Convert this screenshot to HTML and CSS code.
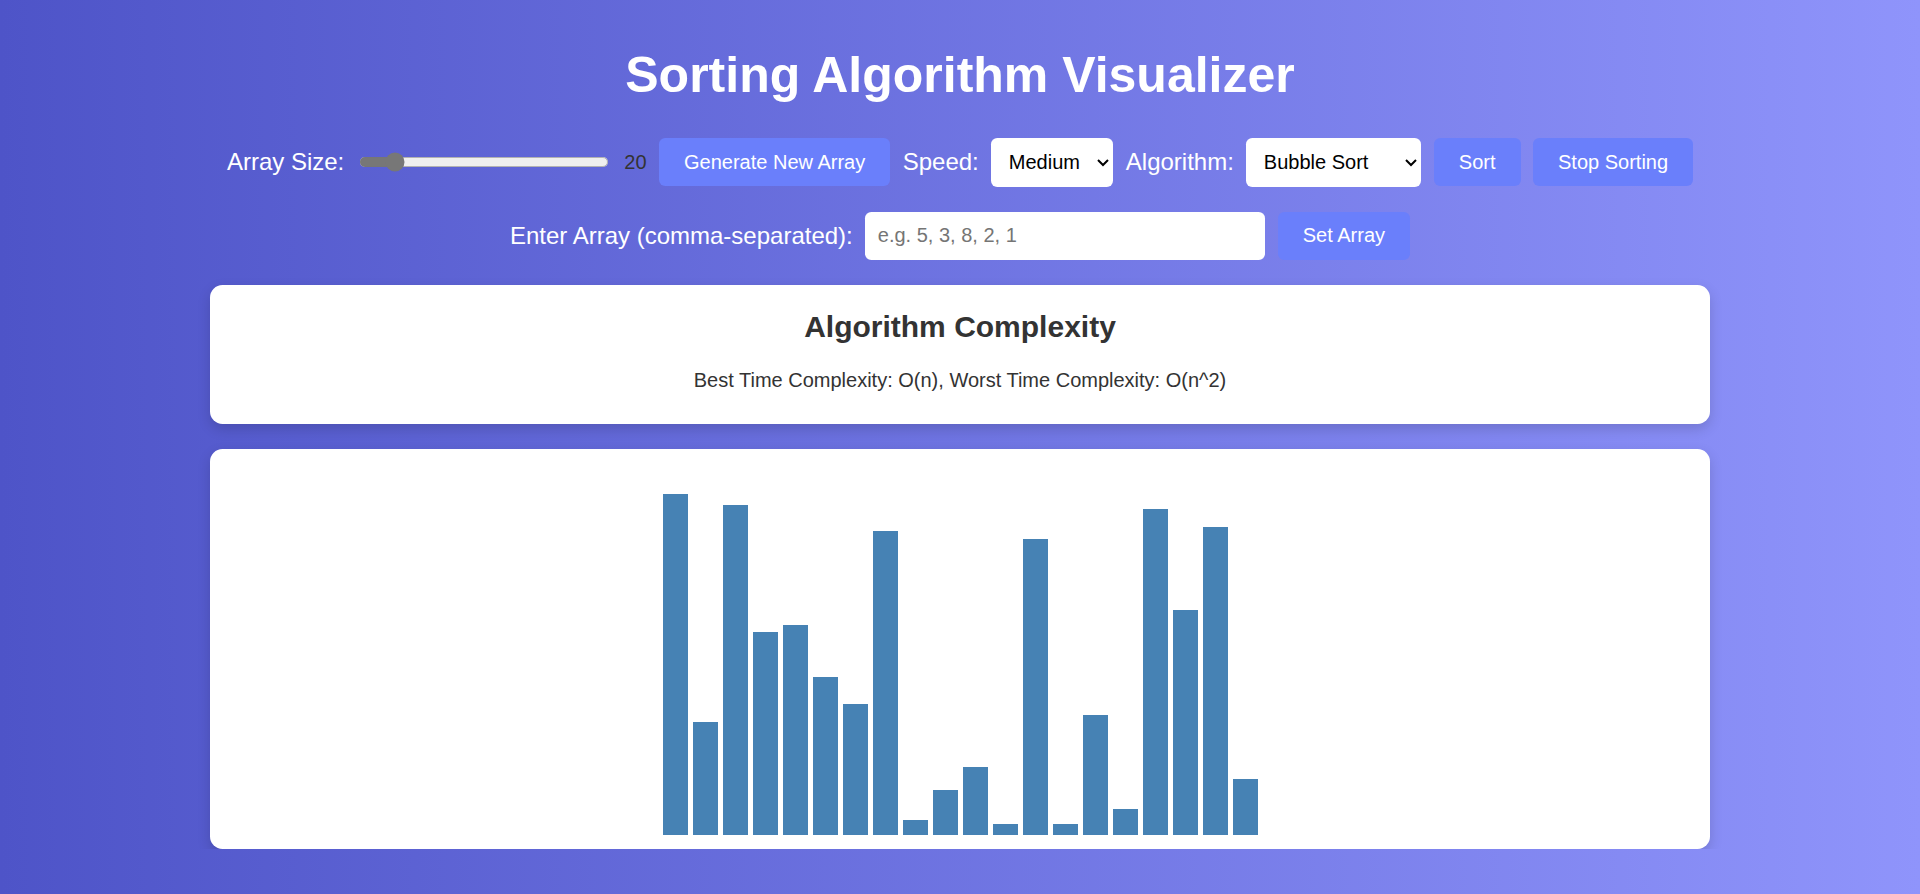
FILE: index.html
```html
<!DOCTYPE html>
<html lang="en">
<head>
<meta charset="utf-8">
<title>Sorting Algorithm Visualizer</title>
<link rel="stylesheet" href="styles.css">
</head>
<body>
  <h1 class="title">Sorting Algorithm Visualizer</h1>

  <div class="controls">
    <label class="label" for="size">Array Size:</label>
    <input class="range" id="size" type="range" min="10" max="100" value="20">
    <span class="size-value">20</span>
    <button class="btn">Generate New Array</button>
    <label class="label" for="speed">Speed:</label>
    <select class="select" id="speed">
      <option>Slow</option>
      <option selected>Medium</option>
      <option>Fast</option>
    </select>
    <label class="label" for="algo">Algorithm:</label>
    <select class="select" id="algo">
      <option selected>Bubble Sort</option>
      <option>Selection Sort</option>
      <option>Insertion Sort</option>
      <option>Merge Sort</option>
      <option>Quick Sort</option>
    </select>
    <button class="btn">Sort</button>
    <button class="btn">Stop Sorting</button>
  </div>

  <div class="controls controls-input">
    <label class="label" for="custom">Enter Array (comma-separated):</label>
    <input class="text-input" id="custom" type="text" placeholder="e.g. 5, 3, 8, 2, 1">
    <button class="btn">Set Array</button>
  </div>

  <main class="container">
    <section class="card complexity">
      <h2 class="complexity-title">Algorithm Complexity</h2>
      <p class="complexity-text">Best Time Complexity: O(n), Worst Time Complexity: O(n^2)</p>
    </section>

    <section class="card chart">
      <div class="bars">
        <div class="bar" style="height:273px"></div>
        <div class="bar" style="height:90px"></div>
        <div class="bar" style="height:264px"></div>
        <div class="bar" style="height:162px"></div>
        <div class="bar" style="height:168px"></div>
        <div class="bar" style="height:126px"></div>
        <div class="bar" style="height:105px"></div>
        <div class="bar" style="height:243px"></div>
        <div class="bar" style="height:12px"></div>
        <div class="bar" style="height:36px"></div>
        <div class="bar" style="height:54px"></div>
        <div class="bar" style="height:9px"></div>
        <div class="bar" style="height:237px"></div>
        <div class="bar" style="height:9px"></div>
        <div class="bar" style="height:96px"></div>
        <div class="bar" style="height:21px"></div>
        <div class="bar" style="height:261px"></div>
        <div class="bar" style="height:180px"></div>
        <div class="bar" style="height:246px"></div>
        <div class="bar" style="height:45px"></div>
      </div>
    </section>
  </main>
</body>
</html>
```

FILE: styles.css
```css
html {
  min-height: 100%;
  background: linear-gradient(to right, #4e54c8, #8f94fb);
}

body {
  margin: 0;
  zoom: 1.25;
  font-family: "Liberation Sans", Arial, sans-serif;
  color: #333;
}

.title {
  margin: 37px 0 26.8px;
  font-size: 40px;
  font-weight: bold;
  line-height: normal;
  color: #fff;
  text-align: center;
}

.controls {
  display: flex;
  justify-content: center;
  align-items: center;
  gap: 10px;
  margin-bottom: 20px;
}

.controls-input {
  margin-bottom: 20px;
}

.label {
  font-size: 19.2px;
  color: #fff;
}

.range {
  width: 200px;
  margin: 2px;
  accent-color: #777;
}

.size-value {
  font-size: 16px;
  color: #333;
}

.btn {
  padding: 10px 20px;
  border: none;
  border-radius: 5px;
  background: #6a7ffb;
  color: #fff;
  font-family: "Liberation Sans", Arial, sans-serif;
  font-size: 16px;
  line-height: normal;
  cursor: pointer;
}

.select {
  padding: 10px;
  border: none;
  border-radius: 5px;
  background: #fff;
  color: #000;
  font-family: "Liberation Sans", Arial, sans-serif;
  font-size: 16px;
}

.text-input {
  width: 300px;
  padding: 10px;
  border: none;
  border-radius: 5px;
  background: #fff;
  font-family: "Liberation Sans", Arial, sans-serif;
  font-size: 16px;
  line-height: normal;
}

.text-input::placeholder {
  color: #757575;
}

.container {
  max-width: 1200px;
  margin: 0 auto;
}

.card {
  background: #fff;
  border-radius: 10px;
  box-shadow: 0 4px 10px rgba(0, 0, 0, 0.15);
}

.complexity {
  padding: 20px 20px 25.5px;
  text-align: center;
}

.complexity-title {
  margin: 0 0 19.92px;
  font-size: 24px;
  font-weight: bold;
  line-height: normal;
}

.complexity-text {
  margin: 0;
  font-size: 16px;
  line-height: normal;
}

.chart {
  margin-top: 20px;
  padding: 10px 10px 11px;
}

.bars {
  display: flex;
  justify-content: center;
  align-items: flex-end;
  height: 299px;
}

.bar {
  width: 20px;
  margin: 0 2px;
  background: steelblue;
}
```
